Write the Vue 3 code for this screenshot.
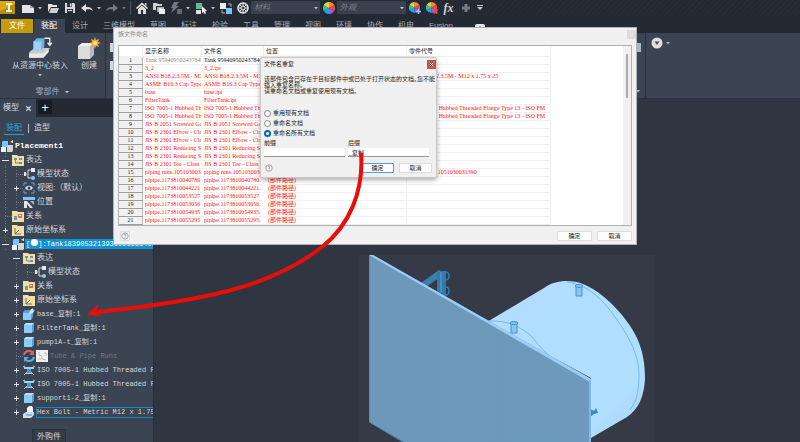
<script setup>
import { ref } from 'vue'

const quick = [
  { i: 'doc' }, { c: 1 }, { i: 'folder' }, { i: 'save' }, { i: 'undo' }, { c: 1 },
  { i: 'redo', dim: 1 }, { c: 1, dim: 1 }, { sep: 1 }, { i: 'home' }, { i: 'docs' },
  { i: 'bolt', dim: 1 }, { c: 1 }, { i: 'pick' }, { c: 1 }, { i: 'parts' }, { i: 'ring' },
]
const tabs = ['文件', '装配', '设计', '三维模型', '草图', '标注', '检验', '工具', '管理', '视图', '环境', '协作', '机电', 'Fusion']

const tree = [
  { d: -1, i: 'asm', t: 'Placement1', k: 'root' },
  { d: 0, g: '-', i: 'rep', t: '表达' },
  { d: 1, i: 'state', t: '模型状态', line: 1 },
  { d: 1, g: '+', i: 'view', t: '视图:（默认）', line: 1 },
  { d: 1, i: 'pos', t: '位置', line: 1 },
  { d: 0, i: 'rel', t: '关系', line: 1 },
  { d: 0, g: '+', i: 'axis', t: '原始坐标系' },
  { d: 0, g: '-', i: 'asm', dot: 1, t: ':Tank183905321393699335140078', k: 'sel' },
  { d: 1, g: '-', i: 'rep', t: '表达' },
  { d: 2, i: 'state', t: '模型状态', line: 1 },
  { d: 1, g: '+', i: 'rel', t: '关系' },
  { d: 1, g: '+', i: 'axis', t: '原始坐标系' },
  { d: 1, g: '+', i: 'cubepin', t: 'base_复制:1', k: 'mono' },
  { d: 1, g: '+', i: 'cube', t: 'FilterTank_复制:1', k: 'mono' },
  { d: 1, g: '+', i: 'cube', t: 'pump1A-t_复制:1', k: 'mono' },
  { d: 1, i: 'sync', i2: 'route', t: 'Tube & Pipe Runs', k: 'mono dim', line: 1 },
  { d: 1, g: '+', i: 'flange', t: 'ISO 7005-1 Hubbed Threaded Flange', k: 'mono' },
  { d: 1, g: '+', i: 'flange', t: 'ISO 7005-1 Hubbed Threaded Flange', k: 'mono' },
  { d: 1, g: '+', i: 'cube', t: 'support1-2_复制:1', k: 'mono' },
  { d: 1, g: '+', i: 'boltpart', t: 'Hex Bolt - Metric M12 x 1.75 x 25', k: 'mono boxed' },
]

const iso = 'ISO 7005-1 Hubbed Threaded Flange Type 13 - ISO FM'
const path = '(部件路径)'
const rows = [
  ['Tank 9594095024378407', 'Tank 9594095024378407', '', ''],
  ['3_2', '3_2.ipt', '', ''],
  ['ANSI B18.2.3.5M - M12 x 1.75', 'ANSI B18.2.3.5M - M12 x 1.75', '', 'ANSI B18.2.3.5M - M12 x 1.75 x 25'],
  ['ASME B16.3 Cap Type - Class', 'ASME B16.3 Cap Type - Class', '', ''],
  ['base', 'base.ipt', '', ''],
  ['FilterTank', 'FilterTank.ipt', '', 'FilterTank'],
  ['ISO 7005-1 Hubbed Threaded', 'ISO 7005-1 Hubbed Threaded', '', iso],
  ['ISO 7005-1 Hubbed Threaded', 'ISO 7005-1 Hubbed Threaded', '', iso],
  ['JIS B 2051 Screwed Gate', 'JIS B 2051 Screwed Gate', '', ''],
  ['JIS B 2301 Elbow - Class', 'JIS B 2301 Elbow - Class', '', ''],
  ['JIS B 2301 Elbow - Class', 'JIS B 2301 Elbow - Class', '', ''],
  ['JIS B 2301 Reducing Socket', 'JIS B 2301 Reducing Socket', '', ''],
  ['JIS B 2301 Reducing Socket', 'JIS B 2301 Reducing Socket', '', ''],
  ['JIS B 2301 Tee - Class', 'JIS B 2301 Tee - Class', '', ''],
  ['piping runs.1051030031390', 'piping runs.1051030031390', '', 'piping runs.1051030031390'],
  ['pipipe.1173810040780', 'pipipe.1173810040780.', path, ''],
  ['pipipe.1173810044221', 'pipipe.1173810044221.', path, ''],
  ['pipipe.1173810053527', 'pipipe.1173810053527', path, ''],
  ['pipipe.1173810053056', 'pipipe.1173810053056.', path, ''],
  ['pipipe.1173810054935', 'pipipe.1173810054935.', path, ''],
  ['pipipe.1173810055295', 'pipipe.1173810055295.', path, ''],
]
const options = ['重用现有文档', '重命名文档', '重命名所有文档']
const choice = ref(2)
const prefix = ref('')
const suffix = ref('_复制')
</script>

<template>
  <div class="app">
    <svg class="defs" aria-hidden="true">
      <symbol id="doc" viewBox="0 0 12 12"><path d="M0 3h8l4 3v5H0z" fill="#e4e4e4" /><path d="M8 3v3h4z" fill="#9ba1aa" /></symbol>
      <symbol id="folder" viewBox="0 0 12 12"><path d="M1 10V2h4l1 1h4v2H4z" fill="#e2e2e2" /><path d="M4 6h8l-2 5H2z" fill="#d0d0d0" /></symbol>
      <symbol id="save" viewBox="0 0 12 12"><path d="M1 1h9l1 1v9H1z" fill="#d8d8d8" /><path d="M3 1h5v4H3zM3 7h6v4H3z" fill="#2b323d" /><path d="M6 1.500h1.500v3H6zM4 8h4v1H4z" fill="#e8e8e8" /></symbol>
      <symbol id="undo" viewBox="0 0 12 12"><path d="M0 6l5-4v3c4-.5 6 1 7 4-2-2-4-2-7-1.500V10z" fill="#e2e2e2" /></symbol>
      <symbol id="redo" viewBox="0 0 12 12"><path d="M12 6L7 2v3c-4-.5-6 1-7 4 2-2 4-2 7-1.500V10z" fill="#727984" /></symbol>
      <symbol id="home" viewBox="0 0 12 12"><path d="M0 6l6-5.500L12 6l-1 1-5-4.500L1 7z" fill="#eee" /><path d="M2 7l4-3.500L10 7v5H7V8H5v4H2z" fill="#ddd" /><path d="M9 1h1.500v3L9 3z" fill="#ddd" /></symbol>
      <symbol id="docs" viewBox="0 0 12 12"><path d="M0 1h4l1 1h4v2H3v4H0z" fill="#cfd1d4" /><path d="M4 5h7v2H6v3H4z" fill="#aaafb7" /><path d="M6 6h2l1 1h3v5H6z" fill="#eee" /></symbol>
      <symbol id="bolt" viewBox="0 0 12 12"><path d="M4 0h5L6 4h3L1 11l2-5H1z" fill="#747a84" /><path d="M7 7h5v5H7z" fill="#646b76" /></symbol>
      <symbol id="pick" viewBox="0 0 12 12"><path d="M1 1h6v6H1z" fill="#62bd8a" /><path d="M1 8h5v4H1z" fill="#dfe2e4" /><path d="M7 4l5 5-2 .3 1 2.200-1.500.5-.8-2L7 11z" fill="#fff" /></symbol>
      <symbol id="parts" viewBox="0 0 12 12"><path d="M0 1h6v6H0z" fill="#eee" /><path d="M6 6h6v6H6z" fill="#79c5fb" /><path d="M8 2h3v3M2 8v3h3" stroke="#bbb" fill="none" /></symbol>
      <symbol id="ring" viewBox="0 0 12 12"><circle cx="6" cy="6" r="5" fill="#343b46" stroke="#eee" stroke-width="1.500" /><path d="M6 1v10M1 6h10M2.500 2.500l7 7M9.500 2.500l-7 7" stroke="#ddd" /><circle cx="6" cy="6" r="2" fill="#343b46" stroke="#eee" /></symbol>
      <symbol id="wheel" viewBox="0 0 12 12"><path d="M6 6V0a6 6 0 0 1 5.200 3z" fill="#ff8a2b" /><path d="M6 6l5.200-3a6 6 0 0 1 0 6z" fill="#f0465a" /><path d="M6 6l5.200 3A6 6 0 0 1 6 12z" fill="#a35ad0" /><path d="M6 6v6A6 6 0 0 1 .8 9z" fill="#2a9df0" /><path d="M6 6L.8 9a6 6 0 0 1 0-6z" fill="#2ec4a0" /><path d="M6 6L.8 3A6 6 0 0 1 6 0z" fill="#f7d03a" /></symbol>
      <symbol id="wheelplus" viewBox="0 0 12 12"><use href="#wheel" width="11" height="11" /><path d="M9.500 7v5M7 9.500h5" stroke="#8fd0ff" stroke-width="1.500" /></symbol>
      <symbol id="wheelx" viewBox="0 0 12 12"><use href="#wheel" width="11" height="11" /><path d="M7.500 7.500l4 4M11.500 7.500l-4 4" stroke="#e5484d" stroke-width="1.800" /></symbol>
      <symbol id="cross" viewBox="0 0 12 12"><path d="M6 2v8M2 6h8" stroke="#747b86" stroke-width="3" /></symbol>
      <symbol id="caret" viewBox="0 0 6 4"><path d="M1 1h4L3 3.500z" fill="#b9bec6" /></symbol>
      <symbol id="barcaret" viewBox="0 0 6 5"><path d="M0 0h6v1H0zM0 2h6L3 5z" fill="#c5c9cf" /></symbol>
      <symbol id="place" viewBox="0 0 24 20"><path d="M2 14l5-4h14l-4 7-2 2H2z" fill="#c9cbcd" /><path d="M2 15l13 0 5-4v3l-5 5H2z" fill="#e9e9e9" /><path d="M6 4l3-3h7v8l-3 3H6z" fill="#66b5ec" /><path d="M6 4h7v8H6z" fill="#9bd2fb" /><path d="M16 1h5v6M19 5l2 2.500L23 5" stroke="#e9e9e9" stroke-width="1.300" fill="none" /></symbol>
      <symbol id="create" viewBox="0 0 24 24"><path d="M1 9l4-3h12l-2 3z" fill="#f2f2f2" /><path d="M1 9h12v13H1z" fill="#dcdcdc" /><path d="M13 9l4-3v12l-4 4z" fill="#b5b7ba" /><path d="M18 0l1 3 3-1-1 3 3 1-3 1 1 3-3-1-1 3-1-3-3 1 1-3-3-1 3-1-1-3 3 1z" fill="#eca72c" /><circle cx="18" cy="6" r="2" fill="#ffe59a" /></symbol>
      <symbol id="asm" viewBox="0 0 12 12"><path d="M1 2l1-1h5v5l-1 1H1z" fill="#79c5fa" /><path d="M0 7h5v5H0z" fill="#f1f1f1" /><path d="M6 6l1-1h5v6l-1 1H6z" fill="#d2d4d7" /><path d="M9 2l3-2v3z" fill="#e8e8e8" /></symbol>
      <symbol id="fold" viewBox="0 0 12 12"><path d="M0 1h5l1 1h6v10H0z" fill="#f3dfa0" /></symbol>
      <symbol id="rep" viewBox="0 0 12 12"><use href="#fold" /><path d="M2 4h3v2H2zM7 4h3v2H7zM7 8h3v2H7z" fill="#6496bd" /><path d="M3.500 6v3H7" stroke="#7f8992" fill="none" /></symbol>
      <symbol id="rel" viewBox="0 0 12 12"><use href="#fold" /><path d="M2 6h3v4H2z" fill="#5c9ccc" /><path d="M6 4h4v4H6z" fill="#e56a4f" /><path d="M7 5h2v1H7z" fill="#fff" /></symbol>
      <symbol id="axis" viewBox="0 0 12 12"><use href="#fold" /><path d="M3 4v6h6M3 10l4-4" stroke="#6c7178" fill="none" /></symbol>
      <symbol id="state" viewBox="0 0 12 12"><path d="M1 6h3M9 2H5v8h4" stroke="#dedede" fill="none" /><path d="M1 4h2v4H1zM8 0h4v4H8z" fill="#e8e8e8" /><circle cx="10" cy="10" r="2" fill="#86cdfb" /></symbol>
      <symbol id="view" viewBox="0 0 12 12"><path d="M1 4V1h3M8 1h3v3M11 8v3H8M4 11H1V8" stroke="#58aee4" fill="none" /><path d="M2 6c2-3 6-3 8 0-2 3-6 3-8 0z" fill="#d9e2e8" /><circle cx="6" cy="6" r="1.500" fill="#343c48" /></symbol>
      <symbol id="pos" viewBox="0 0 12 12"><path d="M0 1h12v3H0z" fill="#7cc6fa" /><path d="M1 5l3 0 6 7H7L4 8v4H1z" fill="#e5e5e5" /><path d="M7 5h4v4z" fill="#aab0b8" /></symbol>
      <symbol id="cube" viewBox="0 0 12 12"><path d="M1 3l2-2h8v8l-2 2H1z" fill="#4fa3dc" /><path d="M1 3h8v8H1z" fill="#8acdfb" /><path d="M1 3l2-2h8L9 3z" fill="#b7e1ff" /></symbol>
      <symbol id="cubepin" viewBox="0 0 12 12"><path d="M0 4l2-2h8v7l-2 3H0z" fill="#4fa3dc" /><path d="M0 5h8v7H0z" fill="#8acdfb" /><path d="M6 5l2-4 1 0 0-1 3 3-1 0-1 2-2 1z" fill="#dcdfe2" /></symbol>
      <symbol id="sync" viewBox="0 0 12 12"><path d="M1 5c1-5 7-5 9-2" stroke="#ec5b5b" stroke-width="2" fill="none" /><path d="M11 0v5H6z" fill="#ec5b5b" /><path d="M11 7c-1 5-7 5-9 2" stroke="#5aaeea" stroke-width="2" fill="none" /><path d="M1 12V7h5z" fill="#5aaeea" /></symbol>
      <symbol id="route" viewBox="0 0 12 12"><path d="M0 0h12v12H0z" fill="#f2f2f2" /><path d="M3 2v3l3 1v3l4 1M2 9h3M8 3h2v3" stroke="#bcbcbc" fill="none" /></symbol>
      <symbol id="flange" viewBox="0 0 12 12"><path d="M0 3l2-1M12 3l-2-1M1 11l3-3M11 11L8 8" stroke="#b9c3cc" /><path d="M1 3h10v2H1z" fill="#9fd0f2" /><path d="M4 5h4v4H4z" fill="#4d98cf" /><path d="M3 9h6v1H3z" fill="#9cc9e8" /></symbol>
      <symbol id="boltpart" viewBox="0 0 12 12"><path d="M4 2l2-2h3l1 2v4H4z" fill="#f1f1f1" /><path d="M0 8l3-2h8v3l-3 3H0z" fill="#d7dadd" /><path d="M3 8h6v2H3z" fill="#79bce9" /></symbol>
      <symbol id="help" viewBox="0 0 10 10"><circle cx="5" cy="5" r="4" fill="#f8f8f8" stroke="#777" stroke-width=".8" /><path d="M3.700 4c0-2 2.700-1.800 2.600-.2C6.200 4.800 5 4.800 5 6M5 7v.8" stroke="#666" stroke-width=".8" fill="none" /></symbol>
      <symbol id="close" viewBox="0 0 8 8"><path d="M2 2l4 4M6 2L2 6" stroke="currentColor" stroke-width="1" /></symbol>
    </svg>

    <header class="quick">
      <svg class="logo" viewBox="0 0 16 15"><path d="M0 1h15v13H0z" fill="#d9a91c" /><path d="M0 11l15-7v10H0z" fill="#b98a0c" /><path d="M6 3h6v2h-2v5h2v2H6v-2h2V5H6z" fill="#fff5d6" /></svg>
      <template v-for="(q, n) in quick" :key="n">
        <i v-if="q.sep" class="vsep"></i>
        <button v-else-if="q.c" class="q-caret" :class="{ dim: q.dim }" aria-label="更多"><svg><use href="#caret" /></svg></button>
        <button v-else class="q-icon" :aria-label="q.i"><svg><use :href="'#' + q.i" /></svg></button>
      </template>
      <label class="combo"><select aria-label="材料"><option>材料</option></select><svg><use href="#caret" /></svg></label>
      <button class="q-icon" aria-label="wheel"><svg><use href="#wheel" /></svg></button>
      <label class="combo"><select aria-label="外观"><option>外观</option></select><svg><use href="#caret" /></svg></label>
      <button class="q-icon" aria-label="add"><svg><use href="#wheelplus" /></svg></button>
      <button class="q-icon" aria-label="clear"><svg><use href="#wheelx" /></svg></button>
      <button class="q-icon fx">fx</button>
      <button class="q-icon" aria-label="plus"><svg><use href="#cross" /></svg></button>
      <button class="q-caret last" aria-label="更多"><svg><use href="#barcaret" /></svg></button>
    </header>

    <nav class="tabs">
      <button v-for="(t, n) in tabs" :key="t" :class="{ file: n === 0, on: n === 1 }">{{ t }}</button>
      <svg class="badge" viewBox="0 0 18 10"><rect width="10" height="9" rx="2" fill="#e6e6e6" /><path d="M3 5l2-3 2 3z" fill="#2b323d" /><path d="M13 3h4l-2 2.500z" fill="#c5c9cf" /></svg>
    </nav>

    <section class="ribbon">
      <div class="group first">
        <div class="tools">
          <button class="big wide"><svg class="place"><use href="#place" /></svg><span>从资源中心装入</span><svg class="mini"><use href="#caret" /></svg></button>
          <button class="big"><svg class="create"><use href="#create" /></svg><span>创建</span></button>
        </div>
        <button class="group-name">零部件 <svg class="mini"><use href="#caret" /></svg></button>
      </div>
      <div class="group middle">
        <div class="stack"><i></i><i></i></div>
        <div class="stack end"><i></i><svg class="mini"><use href="#caret" /></svg></div>
      </div>
      <div class="group tail">
        <svg viewBox="0 0 20 12"><circle cx="6" cy="6" r="5.500" fill="#dedede" /><path d="M3.500 4.500h5L6 8z" fill="#4a4a4a" /><path d="M15 5h4l-2 2.500z" fill="#aeb4bd" /></svg>
      </div>
    </section>

    <main class="work">
      <aside class="browser">
        <div class="btabs"><button class="model">模型 <svg><use href="#close" /></svg></button><button class="add">+</button></div>
        <div class="modes"><button class="on">装配</button><i></i><button>造型</button></div>
        <ul class="tree">
          <li v-for="(r, n) in tree" :key="n" :class="r.k">
            <i v-for="g in Math.max(r.d, 0)" :key="g" class="pad" :class="{ rail: g === 2 || (r.d === 1 && n < 5) }"></i>
            <span v-if="r.d >= 0" class="tog" :class="{ line: r.line, minus: r.g === '-', plus: r.g === '+' }"></span>
            <svg class="ico"><use :href="'#' + r.i" /></svg>
            <svg v-if="r.i2" class="ico"><use :href="'#' + r.i2" /></svg>
            <span class="txt"><template v-if="r.dot">[<b class="dot">●</b>]</template>{{ r.t }}</span>
          </li>
        </ul>
        <button class="foot">外购件</button>
      </aside>

      <div class="viewport">
        <svg class="model3d" viewBox="154 99 646 343">
          <defs>
            <linearGradient id="shell" x1="0" y1="0" x2="1" y2="1"><stop offset="0" stop-color="#b7d9ff" /><stop offset=".3" stop-color="#b0deff" /><stop offset=".8" stop-color="#b0deff" /><stop offset="1" stop-color="#a9cfee" /></linearGradient>
            <linearGradient id="plate" x1="0" x2="1"><stop offset="0" stop-color="#6d98b9" /><stop offset=".9" stop-color="#6c9aba" /><stop offset="1" stop-color="#7098c0" /></linearGradient>
          </defs>
          <path d="M358 255h296v187H358z" fill="#363a46" />
          <path d="M421 283l18-13 7 3-20 14z" fill="#3c7fae" />
          <path d="M437 271h9v25l-9-5z" fill="#3777a5" /><path d="M441 272v20" stroke="#5ea9d8" />
          <g fill="none" stroke="#2582c4" stroke-width="1.500"><ellipse cx="446" cy="276" rx="3" ry="4" /><ellipse cx="446" cy="291" rx="3" ry="4" /></g>
          <path d="M487 322l57-34c7-5 14-7 23-7 11 0 20 4 29 10 12 8 31 26 41 47 6 13 8 27 8 41-1 17-6 30-18 38l-36 21v-60z" fill="url(#shell)" />
          <g fill="none" stroke="#7bb9e2" stroke-width="1">
            <path d="M567 282c19 2 35 16 48 35 12 17 23 35 24 55 0 16-1 28-9 38" />
            <path d="M488 321c20-1 34 6 45 17 5 6 9 12 16 17" />
          </g>
          <g fill="#8bc5ec" stroke="#3f94cf"><path d="M576 286v10h6v-10" /><ellipse cx="579" cy="286" rx="4" ry="1.500" /><path d="M511 323v10h6v-10" /><ellipse cx="514" cy="323" rx="4" ry="1.500" /></g>
          <path d="M590 409l4 2 2-3 2 5-4 1-4 3z" fill="#3289c8" />
          <path d="M369 255l4 0 218 124v63H404l-35-20z" fill="url(#plate)" />
          <path d="M369 255h4l218 124-1 3z" fill="#9bcdfa" /><path d="M590 380v62" stroke="#83b9e8" stroke-width="2" />
          <path d="M369.500 255v167l35 21" stroke="#4a91c3" fill="none" />
        </svg>
      </div>
    </main>

    <section class="dialog families" role="dialog" aria-label="族文件命名">
      <div class="bar"><span>族文件命名</span><button class="x" aria-label="关闭"><svg><use href="#close" /></svg></button></div>
      <div class="grid">
        <table>
          <colgroup><col class="c0" /><col class="c1" /><col class="c2" /><col class="c3" /><col class="c4" /></colgroup>
          <thead><tr><th></th><th>显示名称</th><th>文件名</th><th>位置</th><th>零件代号</th></tr></thead>
          <tbody>
            <tr v-for="(r, n) in rows" :key="n"><th>{{ n + 1 }}</th><td v-for="(c, m) in r" :key="m">{{ c }}</td></tr>
          </tbody>
        </table>
        <div class="scroll"><i></i></div>
      </div>
      <div class="actions"><button class="q" aria-label="帮助"><svg><use href="#help" /></svg></button><button>确定</button><button>取消</button></div>
    </section>

    <section class="dialog dup" role="dialog" aria-label="文件名重复">
      <div class="bar"><span>文件名重复</span><button class="x" aria-label="关闭"><svg><use href="#close" /></svg></button></div>
      <p>该部件包含已存在于目标部件中或已处于打开状态的文档。您不能<br />插入重复名称。<br />请重命名文档或重复使用现有文档。</p>
      <div class="opts"><label v-for="(o, n) in options" :key="o"><input v-model="choice" type="radio" name="mode" :value="n" />{{ o }}</label></div>
      <div class="fields">
        <label>前缀<input v-model="prefix" type="text" /></label>
        <label>后缀<input v-model="suffix" type="text" /></label>
      </div>
      <div class="actions"><button class="q" aria-label="帮助"><svg><use href="#help" /></svg></button><button class="primary">确定</button><button>取消</button></div>
    </section>

    <svg class="arrow" viewBox="0 0 300 180" aria-hidden="true">
      <path d="M281 13C284 50 270 85 242 107C190 148 120 161 18 172" fill="none" stroke="#e80e0a" stroke-width="4" />
      <path d="M8 174l10-9-2 6 4 5z" fill="#e80e0a" stroke="#e80e0a" stroke-width="1" />
    </svg>
  </div>
</template>

<style>
body { margin: 0; background: #2f3541; }
</style>

<style scoped>
.app { position: relative; display: flex; flex-direction: column; min-height: 100vh; overflow: hidden; background: #232a34; color: #d5d8dd; font: 8px/10px "Liberation Sans", "Noto Sans CJK SC", sans-serif; }
.app * { box-sizing: border-box; }
button, input, select { font: inherit; color: inherit; border: 0; background: none; padding: 0; margin: 0; border-radius: 0; }
.defs { position: absolute; width: 0; height: 0; }
svg { display: block; flex: none; }
.quick { display: flex; align-items: center; height: 15px; background: repeating-linear-gradient(135deg, #252c37 0 2px, #222933 2px 4px); }
.logo { width: 16px; height: 15px; margin-right: 3px; }
.q-icon { display: flex; justify-content: center; width: 17px; }
.q-icon svg { width: 12px; height: 12px; }
.q-caret { display: flex; justify-content: center; width: 8px; }
.q-caret svg, .mini, .combo svg { width: 6px; height: 4px; }
.q-caret.last { margin-left: 2px; }
.q-caret.last svg { height: 5px; }
.dim { opacity: .5; }
.vsep { width: 1px; height: 14px; margin: 0 2px; background: #4a515d; }
.fx { font: italic bold 12px/12px "Liberation Serif", serif; }
.combo { display: flex; align-items: center; width: 69px; height: 13px; padding: 0 1px 0 3px; background: #39414e; }
.combo select { flex: 1; min-width: 0; appearance: none; font-style: italic; color: #7d848f; }
.tabs { display: flex; align-items: stretch; height: 18px; padding: 4px 0 0 1px; }
.tabs button { padding: 0 8px 0 7px; color: #a9aeb7; }
.tabs .file { padding: 0 8px; margin-right: 1px; background: #c69a10; color: #fff; }
.tabs .on { background: #3b4453; color: #fff; }
.badge { width: 18px; height: 10px; margin: 5px 0 0 14px; }
.ribbon { display: flex; height: 66px; background: #3b4453; border-bottom: 1px solid #2b323e; }
.group { display: flex; border-right: 1px solid #2a313d; }
.first { flex-direction: column; width: 106px; }
.tools { display: flex; flex: 1; padding-top: 4px; }
.big { display: flex; flex-direction: column; align-items: center; width: 26px; }
.big.wide { width: 76px; padding-left: 4px; }
.big span { white-space: nowrap; }
.place { width: 26px; height: 22px; margin-bottom: 2px; }
.create { width: 24px; height: 24px; }
.big .mini { margin-top: 2px; }
.group-name { display: flex; justify-content: center; align-items: center; gap: 4px; height: 13px; color: #a6acb6; }
.middle { width: 540px; justify-content: space-between; padding: 10px 4px 0 4px; }
.stack { display: flex; flex-direction: column; gap: 9px; }
.stack i { width: 8px; height: 9px; background: #d5d8dc; }
.stack.end { align-items: flex-end; gap: 37px; }
.stack.end i { width: 6px; background: #aeb4bd; }
.tail { flex: 1; border: 0; padding: 4px 5px; }
.tail svg { width: 20px; height: 12px; }
.work { display: flex; flex: 1; min-height: 0; }
.browser { flex: none; width: 154px; background: #3b4453; border-right: 1px solid #272e39; display: flex; flex-direction: column; }
.btabs { display: flex; gap: 2px; height: 18px; background: #232a34; }
.model { display: flex; align-items: center; gap: 5px; width: 36px; padding-left: 3px; background: #3b4453; }
.model svg { width: 9px; height: 9px; }
.add { width: 14px; height: 14px; margin-top: 1px; background: #171c24; color: #fff; font-size: 13px; line-height: 13px; }
.modes { display: flex; align-items: center; height: 22px; padding-left: 4px; }
.modes button { height: 14px; padding: 0 2px; }
.modes .on { color: #2aa3da; border-bottom: 1px solid #2aa3da; }
.modes i { width: 1px; height: 9px; margin: 0 3px 0 4px; background: #b8bdc5; }
.tree { list-style: none; margin: 0; padding: 0; }
.tree li { display: flex; align-items: center; height: 14px; overflow: hidden; white-space: nowrap; }
.tree .ico { width: 12px; height: 12px; margin-right: 1px; }
.pad { flex: none; align-self: stretch; width: 11px; }
.pad.rail { background: repeating-linear-gradient(#6c7480 0 1px, transparent 1px 3px) 5px 0 / 1px 100% no-repeat; }
.tog { position: relative; flex: none; align-self: stretch; width: 12px; background: repeating-linear-gradient(#6c7480 0 1px, transparent 1px 3px) 5px 0 / 1px 100% no-repeat; }
.tog.line { background: repeating-linear-gradient(#6c7480 0 1px, transparent 1px 3px) 5px 0 / 1px 100% no-repeat, repeating-linear-gradient(90deg, #6c7480 0 1px, transparent 1px 2px) 5px 7px / 7px 1px no-repeat; }
.minus::before, .plus::before { content: ""; position: absolute; left: 2px; top: 4px; width: 7px; height: 7px; background: linear-gradient(#dfe2e6, #dfe2e6) 0 3px / 7px 1px no-repeat, #3b4453; }
.plus::before { background: linear-gradient(#dfe2e6, #dfe2e6) 1px 3px / 5px 1px no-repeat, linear-gradient(#dfe2e6, #dfe2e6) 3px 1px / 1px 5px no-repeat, #3b4453; }
.txt { padding-left: 1px; flex: 1; }
.tree .mono, .tree .sel { font-family: "Liberation Mono", "Noto Sans CJK SC", monospace; font-size: 7px; }
.root { font-family: "Liberation Mono", monospace; font-weight: bold; color: #fff; padding-left: 1px; }
.tree .dim { opacity: 1; color: #717986; }
.sel .txt { background: #0b93d3; color: #fff; }
.dot { font: 8px/8px "Noto Sans CJK SC", sans-serif; }
.boxed .txt { border: 1px solid #1286c2; line-height: 9px; padding-left: 0; }
.foot { align-self: flex-start; margin: 10px 0 0 32px; width: 34px; height: 14px; background: #343c49; border: 1px solid #2b323e; border-bottom: 0; }
.viewport { flex: 1; min-width: 0; background: #2f3541; overflow: hidden; }
.model3d { width: 100%; height: auto; }

.dialog { position: absolute; display: flex; flex-direction: column; background: #f0f0f0; color: #222; font: 6px/8px "Liberation Serif", "Noto Sans CJK SC", serif; }
.bar { display: flex; justify-content: space-between; }
.x { display: flex; align-items: center; justify-content: center; width: 9px; height: 9px; background: #dcdcdc; color: #eee; }
.x svg { width: 7px; height: 7px; }
.families { left: 113px; top: 27px; width: 524px; border: 1px solid #b0b3b8; }
.families .bar { height: 17px; padding: 2px 0 0 4px; color: #8b8b8b; }
.grid { display: flex; justify-content: space-between; margin: 0 4px; border: 1px solid #aeb0b4; background: #fff; }
table { border-collapse: separate; border-spacing: 0; table-layout: fixed; width: 432px; }
.c0 { width: 24px; } .c1 { width: 59px; } .c2 { width: 62px; } .c3 { width: 143px; } .c4 { width: 144px; }
th, td { height: 8px; padding: 0 0 0 2px; line-height: 7px; text-align: left; font-weight: normal; white-space: nowrap; overflow: hidden; border-bottom: 1px solid #efefef; border-right: 1px solid #f0f0f0; }
thead th { height: 11px; color: #222; }
tbody th { padding: 0; text-align: center; background: #f1f1f1; border-bottom-color: #9d9d9d; border-right-color: #bbb; color: #222; }
td { color: #ff1010; }
td:nth-child(2), td:nth-child(3) { border-right-color: transparent; }
td:nth-child(4) { padding-left: 4px; }
tbody tr:first-child td { color: #111; }
tbody tr:first-child td:nth-child(2) { color: #888; }
.scroll { width: 8px; padding: 8px 3px; background: #f0f0f0; }
.scroll i { display: block; width: 2px; height: 44px; background: #aaa; }
.actions { display: flex; align-items: center; gap: 5px; }
.actions button { width: 35px; height: 10px; background: #fdfdfd; border: 1px solid #ddd; border-radius: 1px; line-height: 8px; }
.actions .q { display: flex; align-items: center; justify-content: center; width: 10px; margin-right: auto; background: #f6f6f6; }
.actions svg { width: 8px; height: 8px; }
.families .actions { padding: 4px 4px 3px 6px; height: 18px; }
.dup { left: 260px; top: 57px; width: 177px; height: 121px; border: 1px solid #c9c9c9; border-radius: 2px; box-shadow: 0 2px 5px #0005; padding: 0 0 0 3px; }
.dup .bar { padding-top: 2px; height: 18px; }
.dup .x { background: #c75050; color: #fff; }
.dup p { margin: 0; line-height: 6px; white-space: nowrap; font-feature-settings: "palt"; }
.opts { display: flex; flex-direction: column; margin-top: 14px; }
.opts label { display: flex; align-items: center; gap: 2px; height: 10px; }
.opts input { appearance: none; width: 7px; height: 7px; border: 1px solid #888; border-radius: 50%; background: #fff; }
.opts input:checked { border: 2px solid #0a66b8; }
.fields { display: flex; gap: 3px; margin-top: 1px; }
.fields label { display: flex; flex-direction: column; gap: 1px; width: 81px; }
.fields input { height: 9px; background: #fff; border-bottom: 1px solid #999; padding-left: 1px; }
.dup .actions { margin-top: 6px; padding-right: 4px; }
.dup .actions button { width: 33px; }
.dup .actions .q { width: 9px; border: 0; background: none; }
.dup .actions .primary { border-color: #4ca0dc; }
.arrow { position: absolute; left: 80px; top: 140px; width: 300px; height: 180px; pointer-events: none; }
</style>
